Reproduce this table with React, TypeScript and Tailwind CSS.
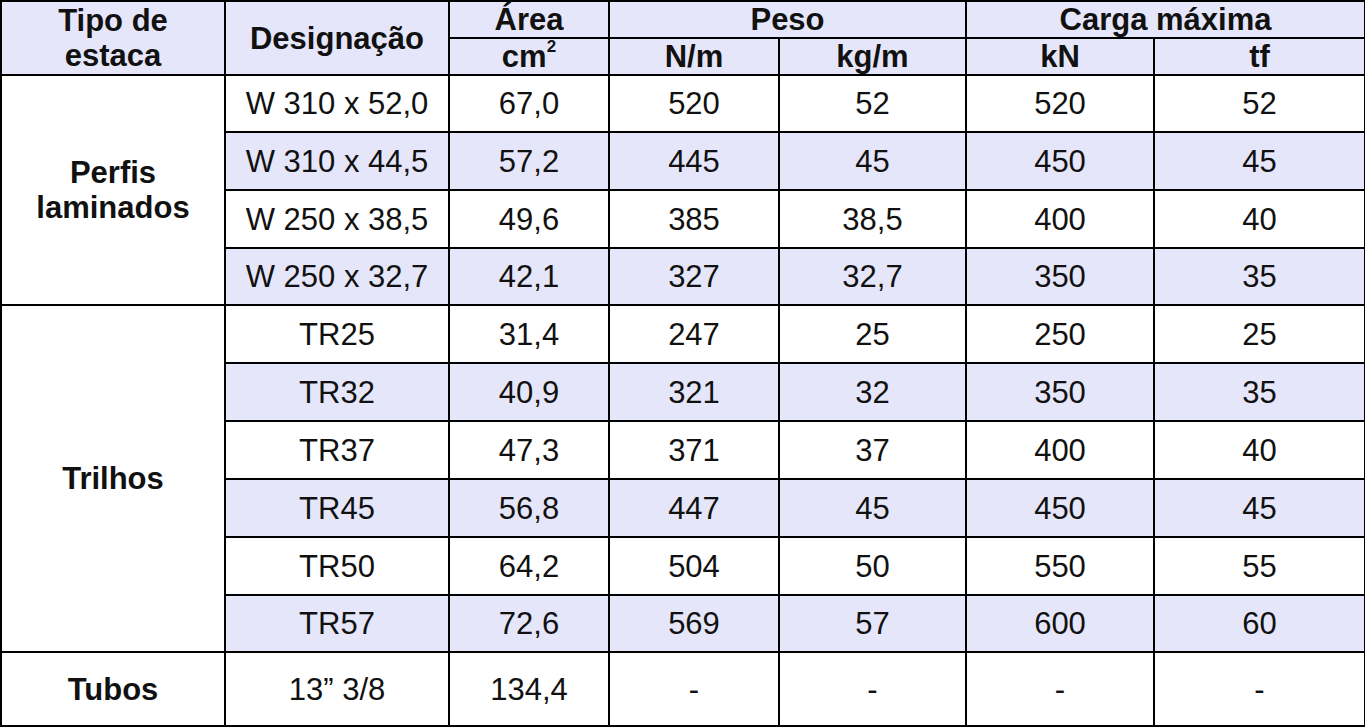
import React from "react";

const HEAD = "bg-[#e6e6fa]";

type Row = { d: string; a: string; n: string; k: string; kn: string; tf: string };

const perfis: Row[] = [
  { d: "W 310 x 52,0", a: "67,0", n: "520", k: "52", kn: "520", tf: "52" },
  { d: "W 310 x 44,5", a: "57,2", n: "445", k: "45", kn: "450", tf: "45" },
  { d: "W 250 x 38,5", a: "49,6", n: "385", k: "38,5", kn: "400", tf: "40" },
  { d: "W 250 x 32,7", a: "42,1", n: "327", k: "32,7", kn: "350", tf: "35" },
];

const trilhos: Row[] = [
  { d: "TR25", a: "31,4", n: "247", k: "25", kn: "250", tf: "25" },
  { d: "TR32", a: "40,9", n: "321", k: "32", kn: "350", tf: "35" },
  { d: "TR37", a: "47,3", n: "371", k: "37", kn: "400", tf: "40" },
  { d: "TR45", a: "56,8", n: "447", k: "45", kn: "450", tf: "45" },
  { d: "TR50", a: "64,2", n: "504", k: "50", kn: "550", tf: "55" },
  { d: "TR57", a: "72,6", n: "569", k: "57", kn: "600", tf: "60" },
];

const td = "border-2 border-black text-center align-middle p-0";

function Cells({ r, striped }: { r: Row; striped: boolean }) {
  const bg = striped ? HEAD : "bg-white";
  return (
    <>
      <td className={`${td} ${bg}`}>{r.d}</td>
      <td className={`${td} ${bg}`}>{r.a}</td>
      <td className={`${td} ${bg}`}>{r.n}</td>
      <td className={`${td} ${bg}`}>{r.k}</td>
      <td className={`${td} ${bg}`}>{r.kn}</td>
      <td className={`${td} ${bg}`}>{r.tf}</td>
    </>
  );
}

export default function App() {
  const heights1 = ["h-[57px]", "h-[58px]", "h-[58px]", "h-[57px]"];
  const heights2 = ["h-[58px]", "h-[58px]", "h-[58px]", "h-[58px]", "h-[58px]", "h-[57px]"];
  return (
    <div className="w-[1365px] h-[728px] bg-white overflow-hidden">
      <table
        className="w-[1364px] table-fixed border-collapse text-[31px] leading-[35px] text-[#111]"
        style={{ fontFamily: '"Liberation Sans", Arial, sans-serif' }}
      >
        <colgroup>
          <col className="w-[224px]" />
          <col className="w-[224px]" />
          <col className="w-[160px]" />
          <col className="w-[170px]" />
          <col className="w-[187px]" />
          <col className="w-[188px]" />
          <col className="w-[211px]" />
        </colgroup>
        <thead>
          <tr className="h-[37px]">
            <th rowSpan={2} className={`${td} ${HEAD} font-bold`}>
              Tipo de
              <br />
              estaca
            </th>
            <th rowSpan={2} className={`${td} ${HEAD} font-bold`}>
              Designação
            </th>
            <th className={`${td} ${HEAD} font-bold leading-[30px]`}>Área</th>
            <th colSpan={2} className={`${td} ${HEAD} font-bold leading-[30px]`}>
              Peso
            </th>
            <th colSpan={2} className={`${td} ${HEAD} font-bold leading-[30px]`}>
              Carga máxima
            </th>
          </tr>
          <tr className="h-[37px]">
            <th className={`${td} ${HEAD} font-bold leading-[32px]`}>
              cm<sup className="text-[17px] relative -top-[15px]">2</sup>
            </th>
            <th className={`${td} ${HEAD} font-bold leading-[32px]`}>N/m</th>
            <th className={`${td} ${HEAD} font-bold leading-[32px]`}>kg/m</th>
            <th className={`${td} ${HEAD} font-bold leading-[32px]`}>kN</th>
            <th className={`${td} ${HEAD} font-bold leading-[32px]`}>tf</th>
          </tr>
        </thead>
        <tbody>
          {perfis.map((r, i) => (
            <tr key={r.d} className={heights1[i]}>
              {i === 0 && (
                <td rowSpan={4} className={`${td} bg-white font-bold`}>
                  Perfis
                  <br />
                  laminados
                </td>
              )}
              <Cells r={r} striped={i % 2 === 1} />
            </tr>
          ))}
          {trilhos.map((r, i) => (
            <tr key={r.d} className={heights2[i]}>
              {i === 0 && (
                <td rowSpan={6} className={`${td} bg-white font-bold`}>
                  Trilhos
                </td>
              )}
              <Cells r={r} striped={i % 2 === 1} />
            </tr>
          ))}
          <tr className="h-[74px]">
            <td className={`${td} bg-white font-bold`}>Tubos</td>
            <td className={`${td} bg-white`}>13” 3/8</td>
            <td className={`${td} bg-white`}>134,4</td>
            <td className={`${td} bg-white`}>-</td>
            <td className={`${td} bg-white`}>-</td>
            <td className={`${td} bg-white`}>-</td>
            <td className={`${td} bg-white`}>-</td>
          </tr>
        </tbody>
      </table>
    </div>
  );
}
